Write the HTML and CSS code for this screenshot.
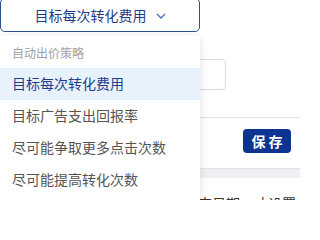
FILE: index.html
```html
<!DOCTYPE html>
<html lang="zh">
<head>
<meta charset="utf-8">
<link rel="stylesheet" href="styles.css">
</head>
<body>
<div class="page">
  <div class="select">
    <span class="select-text">目标每次转化费用</span>
    <svg class="chev" width="10" height="6" viewBox="0 0 10 6"><path d="M1 1 L5 5 L9 1" fill="none" stroke="#4c6fb3" stroke-width="1.3"/></svg>
  </div>
  <div class="form">
    <div class="input-row"><div class="input"></div></div>
    <div class="divider"></div>
    <div class="actions"><button class="save">保存</button></div>
    <div class="band"></div>
    <div class="note">请先选择结束日期，才设置</div>
  </div>
  <div class="menu">
    <div class="menu-head">自动出价策略</div>
    <div class="menu-item active">目标每次转化费用</div>
    <div class="menu-item">目标广告支出回报率</div>
    <div class="menu-item">尽可能争取更多点击次数</div>
    <div class="menu-item">尽可能提高转化次数</div>
  </div>
</div>
</body>
</html>
```
FILE: styles.css
```css
html, body {
  margin: 0;
  padding: 0;
  background: #fff;
  overflow: hidden;
}
body {
  font-family: "Noto Sans CJK SC", "Noto Sans", sans-serif;
  width: 300px;
  height: 200px;
}
.page {
  position: relative;
  width: 300px;
  height: 200px;
  overflow: hidden;
}
.select {
  box-sizing: border-box;
  width: 200px;
  height: 34px;
  margin-top: -2px;
  border: 1.5px solid #2b4f91;
  border-radius: 5px;
  display: flex;
  align-items: center;
  justify-content: center;
  gap: 9px;
  color: #1f3c8c;
  font-size: 14px;
}
.chev {
  display: block;
  margin-top: 2px;
}
.form {
  display: flex;
  flex-direction: column;
}
.input-row {
  padding-top: 27px;
  display: flex;
}
.input {
  box-sizing: border-box;
  margin-left: 160px;
  width: 66px;
  height: 31px;
  border: 1px solid #d9d9d9;
  border-radius: 4px;
}
.divider {
  margin-top: 27px;
  height: 1px;
  background: #e3e3e3;
}
.actions {
  display: flex;
  justify-content: flex-end;
  padding: 11px 9px 0 0;
}
.save {
  width: 48px;
  height: 24px;
  border: 0;
  border-radius: 4px;
  background: #0b3590;
  color: #fff;
  font-family: "Noto Sans CJK SC", sans-serif;
  font-size: 14px;
  font-weight: bold;
  letter-spacing: 3px;
  padding: 0 0 0 3px;
  line-height: 24px;
}
.band {
  margin-top: 15px;
  height: 10px;
  background: #eff0f3;
  border-top: 1px solid #e2e3e7;
  box-sizing: border-box;
}
.note {
  margin-top: 15px;
  padding-left: 128px;
  font-size: 14px;
  line-height: 20px;
  color: #333;
  white-space: nowrap;
}
.menu {
  position: absolute;
  top: 35px;
  left: 0;
  width: 200px;
  height: 175px;
  background: #fff;
  border-radius: 4px;
  box-shadow: 0 2px 10px rgba(0, 0, 0, 0.12);
  display: flex;
  flex-direction: column;
}
.menu-head {
  height: 33px;
  line-height: 35px;
  padding-left: 12px;
  font-size: 12px;
  color: #a0a0a0;
}
.menu-item {
  height: 32px;
  line-height: 30px;
  padding-left: 12px;
  font-size: 14px;
  color: #555;
  white-space: nowrap;
}
.menu-item.active {
  background: #e8f2fd;
  color: #1f3c8c;
}
```
